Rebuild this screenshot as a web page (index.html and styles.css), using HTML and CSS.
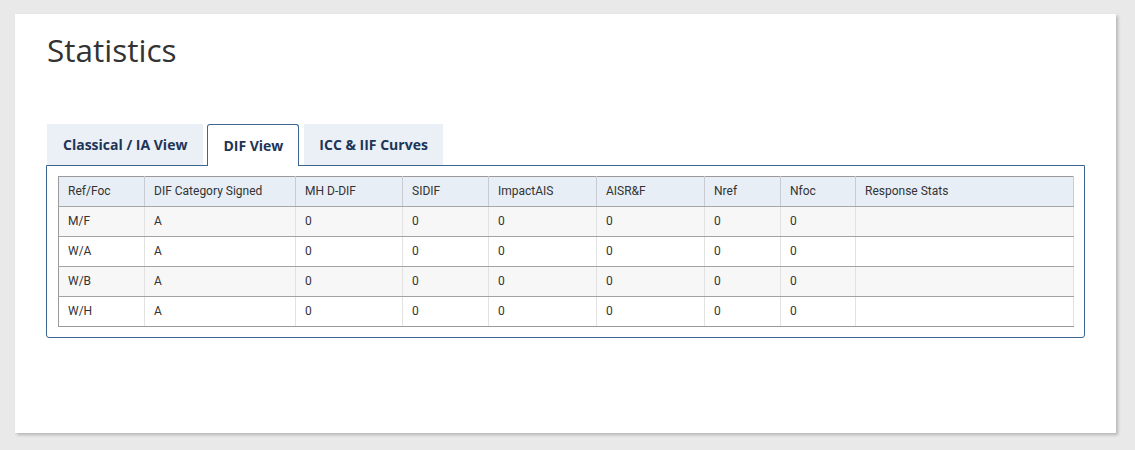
FILE: index.html
```html
<!DOCTYPE html>
<html>
<head>
<meta charset="utf-8">
<link rel="stylesheet" href="styles.css">
</head>
<body>
<div class="card">
  <h1 class="title">Statistics</h1>
  <div class="tabs">
    <div class="tab">Classical / IA View</div>
    <div class="tab active">DIF View</div>
    <div class="tab narrow">ICC &amp; IIF Curves</div>
  </div>
  <div class="panel">
    <table class="grid">
      <colgroup>
        <col class="c1"><col class="c2"><col class="c3"><col class="c4"><col class="c5"><col class="c6"><col class="c7"><col class="c8"><col class="c9">
      </colgroup>
      <thead>
        <tr><th>Ref/Foc</th><th>DIF Category Signed</th><th>MH D-DIF</th><th>SIDIF</th><th>ImpactAIS</th><th>AISR&amp;F</th><th>Nref</th><th>Nfoc</th><th>Response Stats</th></tr>
      </thead>
      <tbody>
        <tr class="odd"><td>M/F</td><td>A</td><td>0</td><td>0</td><td>0</td><td>0</td><td>0</td><td>0</td><td></td></tr>
        <tr><td>W/A</td><td>A</td><td>0</td><td>0</td><td>0</td><td>0</td><td>0</td><td>0</td><td></td></tr>
        <tr class="odd"><td>W/B</td><td>A</td><td>0</td><td>0</td><td>0</td><td>0</td><td>0</td><td>0</td><td></td></tr>
        <tr><td>W/H</td><td>A</td><td>0</td><td>0</td><td>0</td><td>0</td><td>0</td><td>0</td><td></td></tr>
      </tbody>
    </table>
  </div>
</div>
</body>
</html>
```
FILE: styles.css
```css
html, body {
  margin: 0;
  padding: 0;
  background: #e9e9e9;
}
body {
  padding: 14px 19px 17px 15px;
  font-family: "Open Sans", "Liberation Sans", sans-serif;
}
.card {
  background: #fff;
  height: 419px;
  box-sizing: border-box;
  padding: 17px 31px 0 32px;
  box-shadow: 2px 2px 3px rgba(0,0,0,0.22);
}
.title {
  margin: 0;
  font-size: 31.5px;
  font-weight: 400;
  color: #333;
  line-height: 37px;
}
.tabs {
  display: flex;
  gap: 4px;
  margin-top: 56px;
  height: 41px;
  align-items: stretch;
  position: relative;
  z-index: 1;
}
.tab {
  padding: 0 16px;
  background: #eaf0f6;
  color: #1d3557;
  font-weight: 700;
  font-size: 14px;
  line-height: 41px;
  box-sizing: border-box;
}
.tab.narrow {
  padding: 0 15px;
}
.tab.active {
  background: #fff;
  border: 1px solid #3d6590;
  border-bottom: none;
  border-radius: 3px 3px 0 0;
  padding: 0 15px;
  line-height: 41px;
  height: 42px;
  margin-right: 1px;
}
.panel {
  border: 1px solid #3d6590;
  border-radius: 0 0 3px 3px;
  margin-left: -1px;
  width: 1039px;
  box-sizing: border-box;
  padding: 10px 10px 10px 11px;
}
.grid {
  border-collapse: collapse;
  table-layout: fixed;
  width: 1015px;
  font-family: Roboto, "Liberation Sans", sans-serif;
  font-size: 12px;
  color: #333;
  border: 1px solid #9a9a9a;
}
.c1 { width: 86px; }
.c2 { width: 151px; }
.c3 { width: 107px; }
.c4 { width: 86px; }
.c5 { width: 108px; }
.c6 { width: 108px; }
.c7 { width: 76px; }
.c8 { width: 75px; }
.c9 { width: 218px; }
.grid th {
  background: #e8eef6;
  font-weight: 400;
  text-align: left;
  height: 28px;
  padding: 0 0 1px 9px;
  border-right: 1px solid #c8ccd2;
  border-bottom: 1px solid #a6a6a6;
}
.grid td {
  height: 28px;
  padding: 0 0 1px 9px;
  border-right: 1px solid #e2e2e2;
  border-bottom: 1px solid #a3a3a3;
}
.grid tr.odd td {
  background: #f7f7f7;
}
.grid tbody tr:last-child td {
  border-bottom: 1px solid #9a9a9a;
}
```
